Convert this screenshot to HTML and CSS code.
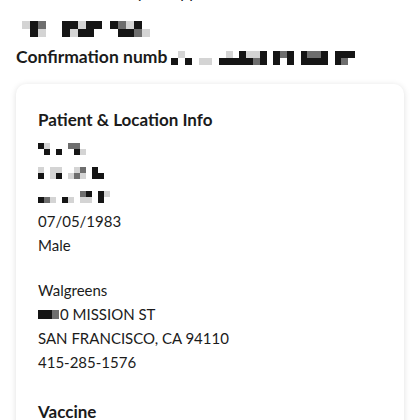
FILE: index.html
```html
<!DOCTYPE html>
<html lang="en">
<head>
    <meta charset="UTF-8">
    <meta name="viewport" content="width=device-width, initial-scale=1.0">
    <title>Appointment Confirmation</title>
    <link rel="stylesheet" href="styles.css">
</head>
<body>
    <div class="page">
        <div class="intro">Details of your appointment</div>

        <div class="mosaic mosaic-name">
            <i class="l"></i><i class="e"></i>
            <i class="d"></i><i class="d"></i>
            <i class="g"></i><i class="l"></i>
            <i class="e"></i><i class="e"></i>
            <i class="e"></i><i class="e"></i>
            <i class="d"></i><i class="d"></i>
            <i class="d"></i><i class="l"></i>
            <i class="l"></i><i class="d"></i>
            <i class="d"></i><i class="d"></i>
            <i class="d"></i><i class="e"></i>
            <i class="e"></i><i class="e"></i>
            <i class="d"></i><i class="e"></i>
            <i class="g"></i><i class="d"></i>
            <i class="l"></i><i class="d"></i>
            <i class="d"></i><i class="g"></i>
            <i class="e"></i><i class="l"></i>
        </div>

        <div class="confirmation">
            <span>Confirmation numb</span>
            <span class="mosaic mosaic-inline">
                <i class="e"></i><i class="d"></i>
                <i class="l"></i><i class="e"></i>
                <i class="e"></i><i class="d"></i>
                <i class="e"></i><i class="e"></i>
                <i class="e"></i><i class="l"></i>
                <i class="e"></i><i class="l"></i>
                <i class="e"></i><i class="e"></i>
                <i class="e"></i><i class="d"></i>
                <i class="l"></i><i class="d"></i>
                <i class="e"></i><i class="d"></i>
                <i class="d"></i><i class="d"></i>
                <i class="l"></i><i class="d"></i>
                <i class="l"></i><i class="g"></i>
                <i class="d"></i><i class="d"></i>
                <i class="e"></i><i class="e"></i>
                <i class="d"></i><i class="d"></i>
                <i class="g"></i><i class="e"></i>
                <i class="d"></i><i class="d"></i>
                <i class="e"></i><i class="e"></i>
                <i class="d"></i><i class="d"></i>
                <i class="g"></i><i class="d"></i>
                <i class="g"></i><i class="d"></i>
                <i class="d"></i><i class="d"></i>
                <i class="e"></i><i class="e"></i>
                <i class="d"></i><i class="d"></i>
                <i class="d"></i><i class="g"></i>
                <i class="d"></i><i class="e"></i>
            </span>
        </div>

        <div class="card">
            <h2 class="card-title">Patient &amp; Location Info</h2>

            <div class="info-block">
                <div class="info-line">
                    <span class="mosaic mosaic-line">
                        <i class="d"></i><i class="e"></i>
                        <i class="l"></i><i class="d"></i>
                        <i class="e"></i><i class="e"></i>
                        <i class="e"></i><i class="d"></i>
                        <i class="e"></i><i class="e"></i>
                        <i class="g"></i><i class="e"></i>
                        <i class="g"></i><i class="d"></i>
                        <i class="e"></i><i class="l"></i>
                    </span>
                </div>
                <div class="info-line">
                    <span class="mosaic mosaic-line">
                        <i class="l"></i><i class="d"></i>
                        <i class="e"></i><i class="e"></i>
                        <i class="l"></i><i class="l"></i>
                        <i class="l"></i><i class="d"></i>
                        <i class="e"></i><i class="e"></i>
                        <i class="e"></i><i class="l"></i>
                        <i class="l"></i><i class="g"></i>
                        <i class="g"></i><i class="l"></i>
                        <i class="e"></i><i class="e"></i>
                        <i class="d"></i><i class="d"></i>
                        <i class="e"></i><i class="d"></i>
                    </span>
                </div>
                <div class="info-line">
                    <span class="mosaic mosaic-line">
                        <i class="e"></i><i class="d"></i>
                        <i class="e"></i><i class="g"></i>
                        <i class="e"></i><i class="l"></i>
                        <i class="e"></i><i class="e"></i>
                        <i class="e"></i><i class="d"></i>
                        <i class="e"></i><i class="l"></i>
                        <i class="e"></i><i class="e"></i>
                        <i class="g"></i><i class="l"></i>
                        <i class="d"></i><i class="l"></i>
                        <i class="e"></i><i class="e"></i>
                        <i class="d"></i><i class="d"></i>
                        <i class="l"></i><i class="e"></i>
                    </span>
                </div>
                <div class="info-line">07/05/1983</div>
                <div class="info-line">Male</div>
            </div>

            <div class="info-block">
                <div class="info-line">Walgreens</div>
                <div class="info-line"><span class="mosaic mosaic-num"><i class="d"></i><i class="d"></i><i class="g"></i></span>0 MISSION ST</div>
                <div class="info-line">SAN FRANCISCO, CA 94110</div>
                <div class="info-line">415-285-1576</div>
            </div>

            <h2 class="card-title card-title-spaced">Vaccine</h2>
        </div>
    </div>
</body>
</html>
```

FILE: styles.css
```css
* {
    margin: 0;
    padding: 0;
    box-sizing: border-box;
    font-family: 'Lato', 'Liberation Sans', sans-serif;
}

body {
    background: #ffffff;
    color: #1b1b1b;
}

.page {
    padding: 0 16px;
}

.intro {
    font-size: 16px;
    line-height: 20px;
    margin-top: -18px;
    padding-left: 50px;
}

/* pixelated (redacted) text */
.mosaic {
    display: inline-grid;
    grid-auto-flow: column;
    grid-template-rows: repeat(2, 7px);
    grid-auto-columns: 7px;
}

.mosaic i {
    display: block;
}

.mosaic .d { background: #151515; }
.mosaic .g { background: #6e6e6e; }
.mosaic .l { background: #d4d4d4; }
.mosaic .e { background: transparent; }

.mosaic-name {
    display: grid;
    margin: 19px 0 0 6px;
    grid-template-rows: repeat(2, 8px);
    grid-auto-columns: 8px;
}

.confirmation {
    display: flex;
    align-items: center;
    margin-top: 7px;
    font-size: 17.5px;
    font-weight: 700;
    line-height: 26px;
}

.mosaic-inline {
    grid-template-rows: repeat(2, 7px);
    grid-auto-columns: 6.8px;
    margin: 2px 0 0 4px;
}

.card {
    margin-top: 14px;
    background: #ffffff;
    border-radius: 10px;
    box-shadow: 0 1px 6px rgba(0, 0, 0, 0.13);
    padding: 25px 22px 20px 22px;
    display: flex;
    flex-direction: column;
    gap: 21px;
}

.card-title {
    font-size: 17px;
    font-weight: 700;
    line-height: 22px;
}

.card-title-spaced {
    margin-top: 6px;
}

.info-block {
    display: flex;
    flex-direction: column;
    margin-top: -15px;
}

.info-block + .info-block {
    margin-top: 0;
}

.info-line {
    font-size: 15px;
    line-height: 24px;
    height: 24px;
    display: flex;
    align-items: center;
}

.mosaic-line {
    grid-template-rows: repeat(2, 6px);
    grid-auto-columns: 6px;
}

.mosaic-num {
    grid-template-rows: 9px;
    grid-auto-columns: 7px;
    margin-right: 1px;
}
```
